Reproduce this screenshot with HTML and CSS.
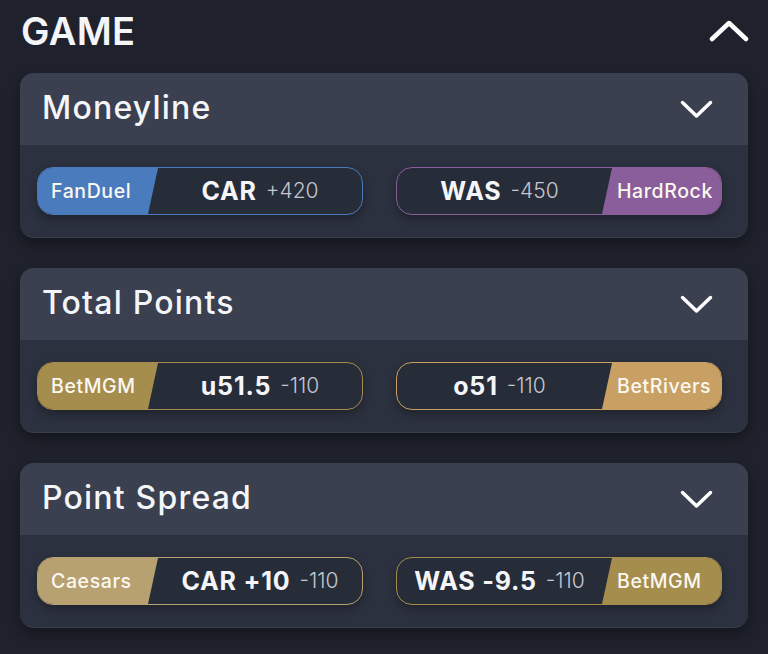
FILE: index.html
```html
<!DOCTYPE html>
<html lang="en">
<head>
    <meta charset="UTF-8">
    <meta name="viewport" content="width=device-width, initial-scale=1.0">
    <title>Game Odds</title>
    <link rel="stylesheet" href="styles.css">
</head>
<body>
    <div class="top">
        <h1>GAME</h1>
        <svg class="chev-up" width="40" height="22" viewBox="0 0 40 22">
            <polyline points="3,19 20,3 37,19" />
        </svg>
    </div>

    <!-- Moneyline -->
    <div class="card">
        <div class="card-head">
            <h2>Moneyline</h2>
            <svg class="chev-down" width="33" height="19" viewBox="0 0 33 19">
                <polyline points="2.5,2.5 16.5,16 30.5,2.5" />
            </svg>
        </div>
        <div class="card-body">
            <div class="pill fanduel">
                <span class="book left">FanDuel</span>
                <span class="line"><b>CAR</b> <span class="price">+420</span></span>
            </div>
            <div class="pill hardrock">
                <span class="line"><b>WAS</b> <span class="price">-450</span></span>
                <span class="book right">HardRock</span>
            </div>
        </div>
    </div>

    <!-- Total Points -->
    <div class="card">
        <div class="card-head">
            <h2>Total Points</h2>
            <svg class="chev-down" width="33" height="19" viewBox="0 0 33 19">
                <polyline points="2.5,2.5 16.5,16 30.5,2.5" />
            </svg>
        </div>
        <div class="card-body">
            <div class="pill betmgm">
                <span class="book left">BetMGM</span>
                <span class="line"><b>u51.5</b> <span class="price">-110</span></span>
            </div>
            <div class="pill betrivers">
                <span class="line"><b>o51</b> <span class="price">-110</span></span>
                <span class="book right">BetRivers</span>
            </div>
        </div>
    </div>

    <!-- Point Spread -->
    <div class="card">
        <div class="card-head">
            <h2>Point Spread</h2>
            <svg class="chev-down" width="33" height="19" viewBox="0 0 33 19">
                <polyline points="2.5,2.5 16.5,16 30.5,2.5" />
            </svg>
        </div>
        <div class="card-body">
            <div class="pill caesars">
                <span class="book left">Caesars</span>
                <span class="line"><b>CAR +10</b> <span class="price">-110</span></span>
            </div>
            <div class="pill betmgm">
                <span class="line"><b>WAS -9.5</b> <span class="price">-110</span></span>
                <span class="book right">BetMGM</span>
            </div>
        </div>
    </div>
</body>
</html>
```

FILE: styles.css
```css
body {
    margin: 0;
    padding: 0 20px;
    background-color: #1f222c;
    font-family: Inter, Lato, sans-serif;
    color: #f4f5f8;
}
.top {
    height: 61px;
    padding-bottom: 12px;
    display: flex;
    align-items: center;
    justify-content: space-between;
}
h1 {
    margin: 0 0 0 1px;
    font-size: 38px;
    font-weight: 600;
    letter-spacing: 0.3px;
}
.chev-up polyline,
.chev-down polyline {
    fill: none;
    stroke: #ffffff;
    stroke-linecap: round;
    stroke-linejoin: round;
}
.chev-up {
    margin-right: -1px;
}
.chev-up polyline {
    stroke-width: 4.5;
}
.chev-down polyline {
    stroke-width: 3.5;
}
.card {
    margin-bottom: 30px;
    border-radius: 14px;
    overflow: hidden;
    background: #2c313f;
    box-shadow: 0 6px 14px rgba(0,0,0,0.35);
    border-bottom: 1px solid #3a3f4c;
}
.card-head {
    height: 72px;
    padding: 0 35px 0 22px;
    display: flex;
    align-items: center;
    justify-content: space-between;
    background: #3a4050;
}
h2 {
    margin: 0;
    font-size: 32px;
    font-weight: 500;
    letter-spacing: 1.2px;
    padding-bottom: 4px;
}
.card-body {
    height: 92px;
    padding: 0 26px 0 17px;
    display: flex;
    align-items: center;
    justify-content: space-between;
}
.pill {
    width: 326px;
    height: 48px;
    box-sizing: border-box;
    border: 1.5px solid var(--brand);
    border-radius: 16px;
    background: #272c39;
    overflow: hidden;
    display: flex;
    align-items: stretch;
    box-shadow: 0 4px 8px rgba(0,0,0,0.3);
}
.book {
    display: flex;
    align-items: center;
    background: var(--brand);
    color: #fbf8f0;
    font-size: 19.5px;
    font-weight: 500;
    letter-spacing: 0.6px;
    flex-shrink: 0;
    box-sizing: border-box;
}
.book.left {
    width: 120px;
    padding-left: 13px;
    clip-path: polygon(0 0, 100% 0, calc(100% - 10px) 100%, 0 100%);
}
.book.right {
    width: 119px;
    padding-left: 15px;
    clip-path: polygon(10px 0, 100% 0, 100% 100%, 0 100%);
}
.line {
    flex: 1;
    display: flex;
    align-items: center;
    justify-content: center;
    gap: 9px;
    font-size: 25px;
    padding-bottom: 1px;
}
.line b {
    font-weight: 700;
    letter-spacing: 0.8px;
    white-space: pre;
}
.price {
    font-size: 21px;
    font-weight: 300;
    color: #c3c7d1;
}
.fanduel { --brand: #4a7bbd; }
.hardrock { --brand: #8a5d9b; }
.betmgm { --brand: #a58d4e; }
.betrivers { --brand: #c8a064; }
.caesars { --brand: #b8a170; }
```
